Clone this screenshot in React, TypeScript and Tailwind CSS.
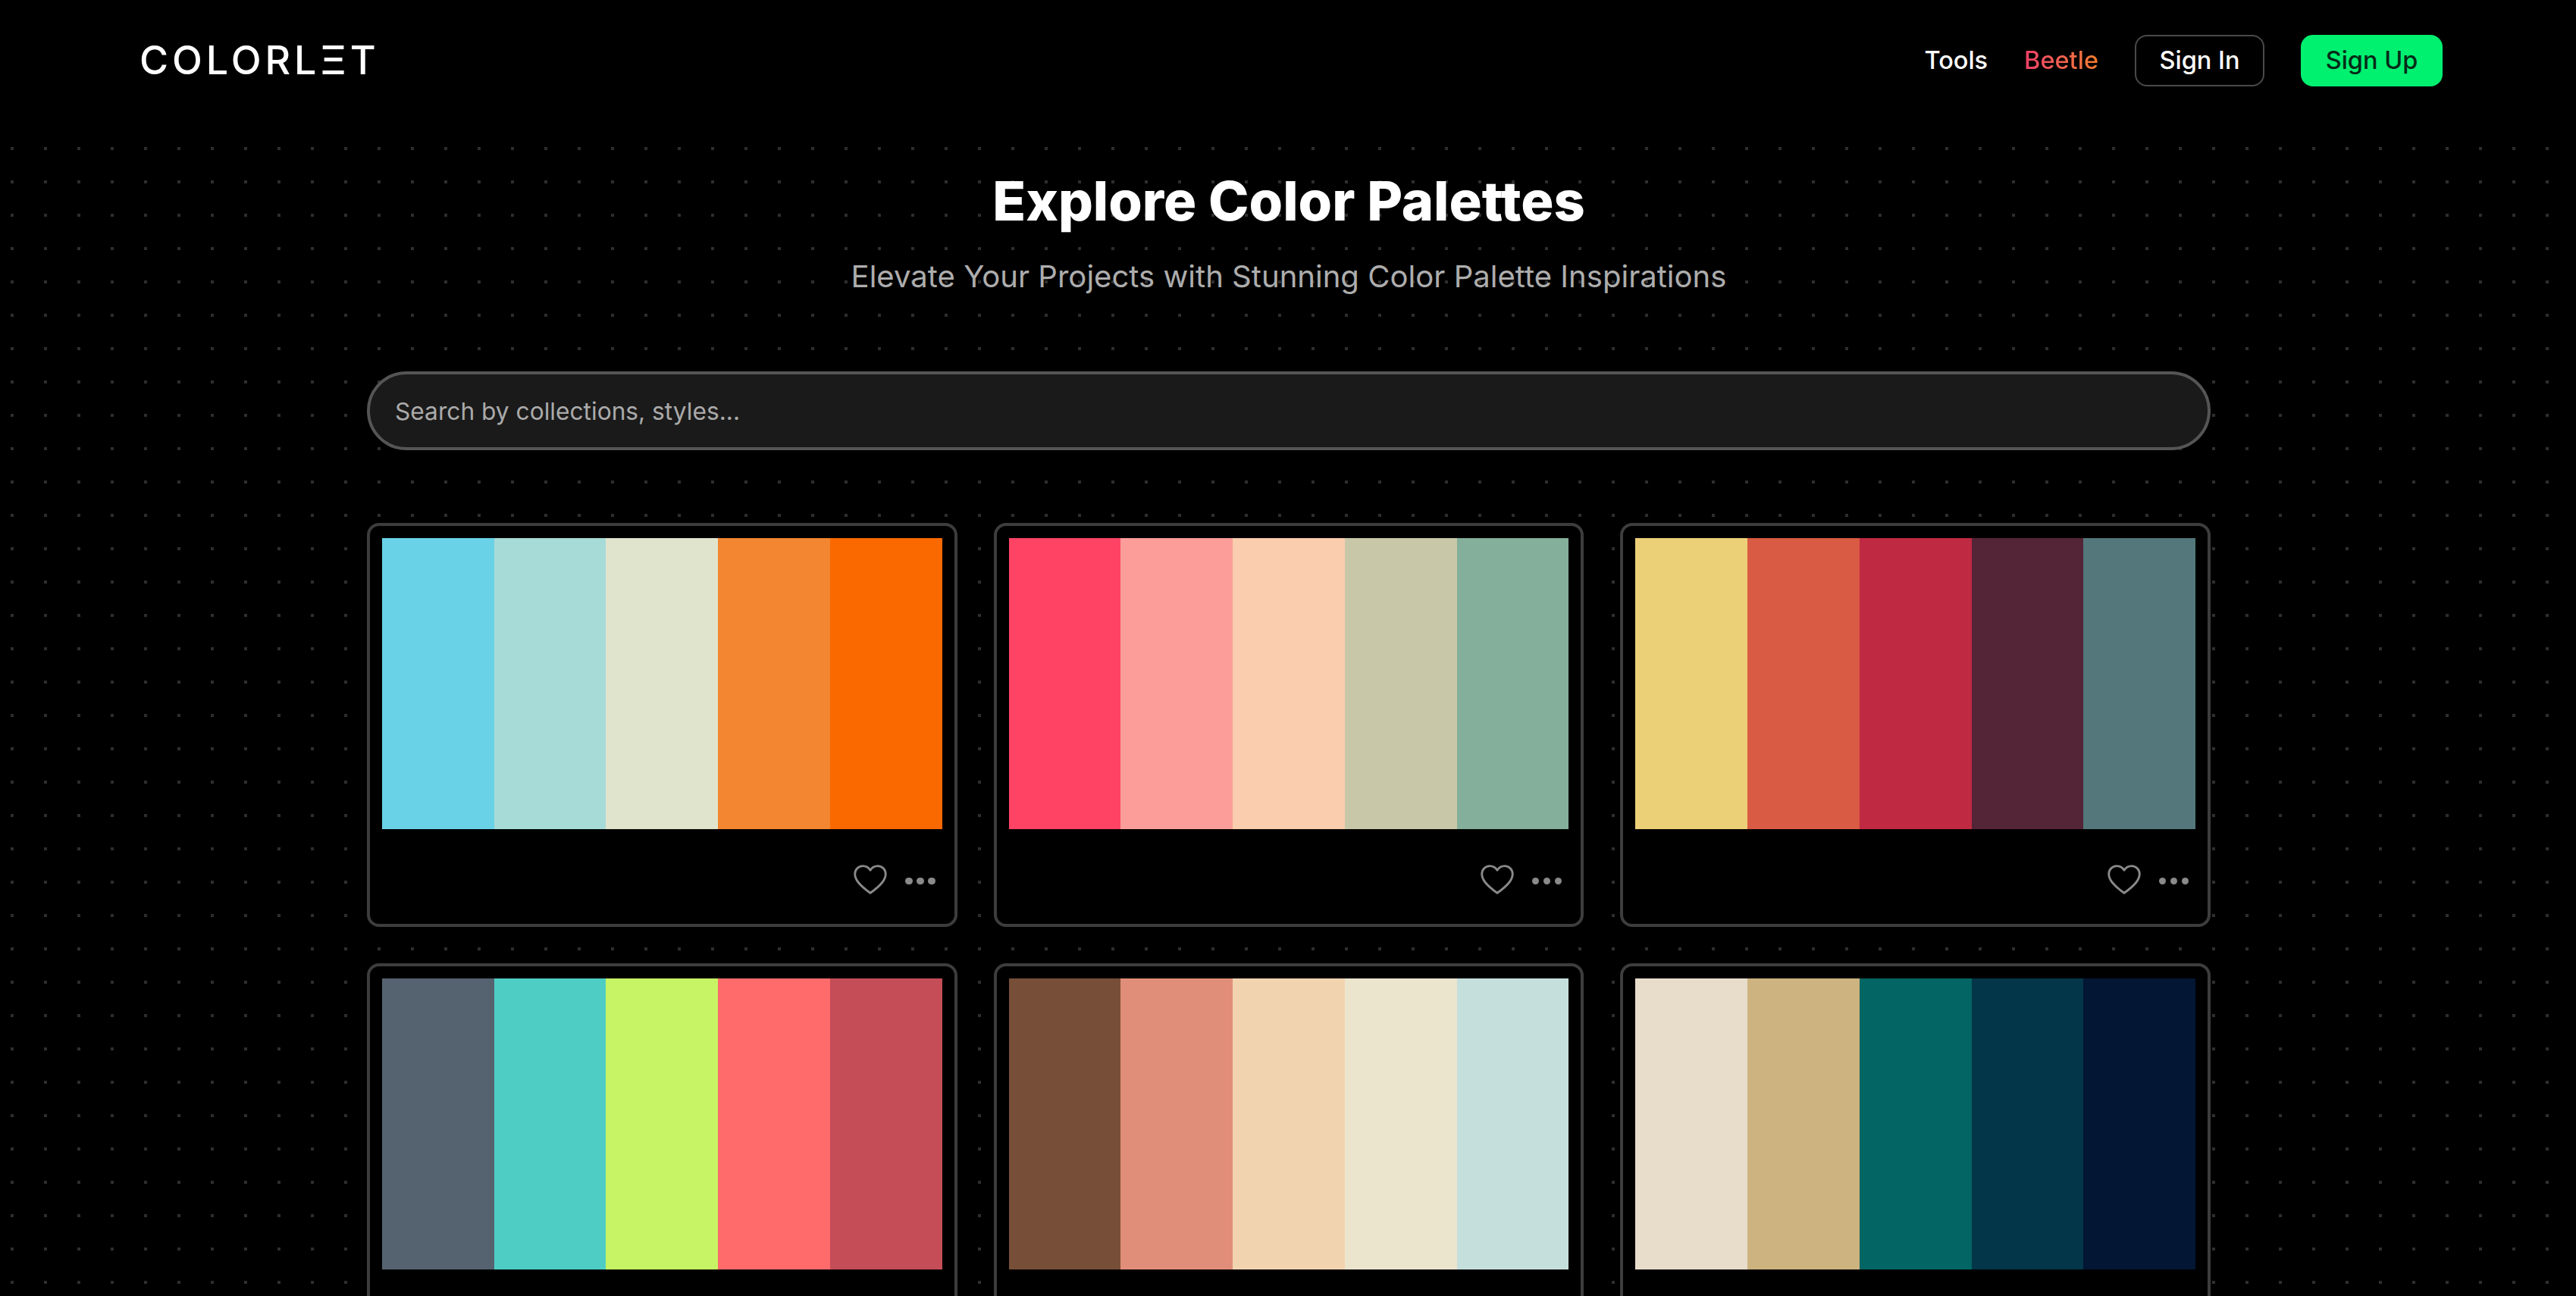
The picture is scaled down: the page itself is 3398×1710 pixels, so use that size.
const palettes: string[][] = [
  ["#69D2E7", "#A7DBD8", "#E0E4CC", "#F38630", "#FA6900"],
  ["#FE4365", "#FC9D9A", "#F9CDAD", "#C8C8A9", "#83AF9B"],
  ["#ECD078", "#D95B43", "#C02942", "#542437", "#53777A"],
  ["#556270", "#4ECDC4", "#C7F464", "#FF6B6B", "#C44D58"],
  ["#774F38", "#E08E79", "#F1D4AF", "#ECE5CE", "#C5E0DC"],
  ["#E8DDCB", "#CDB380", "#036564", "#033649", "#031634"],
];

function Heart() {
  return (
    <svg width="44" height="39" viewBox="0 0 46 41" fill="none" stroke="#8a8a8a" strokeWidth="3" strokeLinejoin="round">
      <path d="M23 7.5C20.5 3.5 16.5 1.7 12.5 1.7C6.5 1.7 1.7 6.6 1.7 13C1.7 17.5 3.6 21.2 6.8 25C11 30 16.5 34.6 23 39.2C29.5 34.6 35 30 39.2 25C42.4 21.2 44.3 17.5 44.3 13C44.3 6.6 39.5 1.7 33.5 1.7C29.5 1.7 25.5 3.5 23 7.5Z" />
    </svg>
  );
}

function Card({ colors }: { colors: string[] }) {
  return (
    <div className="h-[533px] rounded-[16px] border-[4px] border-[#3d3d3d] bg-black p-[16px]">
      <div className="flex h-[384px]">
        {colors.map((c) => (
          <div key={c} className="flex-1" style={{ backgroundColor: c }} />
        ))}
      </div>
      <div className="flex items-center justify-end pr-[9px] pt-[47px]">
        <Heart />
        <div className="ml-[24px] mt-[4px] flex gap-[5.5px]">
          <span className="h-[9.5px] w-[9.5px] rounded-full bg-[#8a8a8a]" />
          <span className="h-[9.5px] w-[9.5px] rounded-full bg-[#8a8a8a]" />
          <span className="h-[9.5px] w-[9.5px] rounded-full bg-[#8a8a8a]" />
        </div>
      </div>
    </div>
  );
}

export default function App() {
  return (
    <div className="h-[1710px] overflow-hidden bg-black font-['Inter',sans-serif] text-white">
      <div className="w-[3400px]">
        <header className="flex h-[160px] items-center justify-between pl-[184px] pr-[178px]">
          <div aria-label="Colorlet" className="text-[52px] font-medium leading-none tracking-[4.9px] text-white">
            COLORLΞT
          </div>
          <nav className="flex items-center text-[32.5px] font-medium">
            <a className="mr-[48px]">Tools</a>
            <a className="mr-[48px] bg-gradient-to-r from-[#f03e66] to-[#f47b2a] bg-clip-text text-transparent">Beetle</a>
            <button className="flex h-[68px] w-[171px] items-center justify-center rounded-[16px] border-[2px] border-[#4a4a4a] bg-black">
              Sign In
            </button>
            <button className="ml-[48px] flex h-[68px] w-[187px] items-center justify-center rounded-[16px] bg-[#00f070] text-[#062b18]">
              Sign Up
            </button>
          </nav>
        </header>
        <main className="bg-[conic-gradient(from_270deg_at_4px_4px,#2e2e2e_0_90deg,transparent_90deg)] bg-[length:44px_44px] bg-[position:14px_34px] pt-[61px]">
          <div className="flex flex-col items-center">
            <h1 className="text-[72px] font-extrabold leading-[88px] text-white">Explore Color Palettes</h1>
            <p className="mt-[31px] text-[40.1px] leading-[50px] text-[#adadad]">
              Elevate Your Projects with Stunning Color Palette Inspirations
            </p>
          </div>
          <div className="mx-auto mt-[100px] w-[2432px]">
            <input
              readOnly
              placeholder="Search by collections, styles..."
              className="h-[104px] w-full rounded-full border-[4px] border-[#555555] bg-[#1a1a1a] px-[33px] text-[31.7px] text-[#aaaaaa] outline-none placeholder:text-[#aaaaaa]"
            />
            <div className="mt-[96px] grid grid-cols-3 gap-[48px]">
              {palettes.map((p, i) => (
                <Card key={i} colors={p} />
              ))}
            </div>
          </div>
        </main>
      </div>
    </div>
  );
}
